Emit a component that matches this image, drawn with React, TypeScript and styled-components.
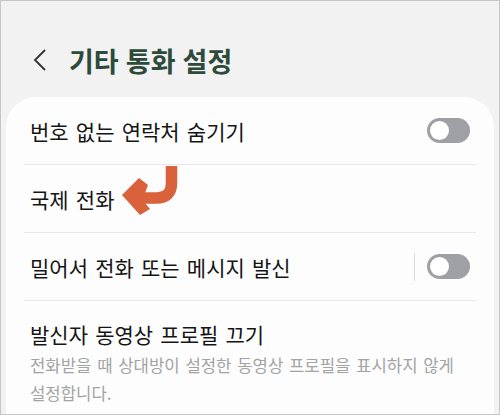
import styled, { createGlobalStyle } from 'styled-components'

const GlobalStyle = createGlobalStyle`
  html, body {
    margin: 0;
    padding: 0;
    background: #f2f2f2;
  }
  * {
    box-sizing: border-box;
  }
`

type Item = {
  label: string
  toggle?: boolean
  divider?: boolean
  arrow?: boolean
  desc?: string
}

const items: Item[] = [
  { label: '번호 없는 연락처 숨기기', toggle: true },
  { label: '국제 전화', arrow: true },
  { label: '밀어서 전화 또는 메시지 발신', toggle: true, divider: true },
  {
    label: '발신자 동영상 프로필 끄기',
    desc: '전화받을 때 상대방이 설정한 동영상 프로필을 표시하지 않게 설정합니다.',
  },
]

export default function App() {
  return (
    <Frame>
      <GlobalStyle />
      <Header>
        <BackIcon viewBox="0 0 14 24">
          <path d="M12 2 L2 12 L12 22" />
        </BackIcon>
        <Title>기타 통화 설정</Title>
      </Header>
      <Card>
        {items.map((item, i) => (
          <Row key={item.label} last={i === items.length - 1}>
            <Texts>
              <Label>
                {item.label}
                {item.arrow && <Arrow />}
              </Label>
              {item.desc && <Desc>{item.desc}</Desc>}
            </Texts>
            {item.divider && <VLine />}
            {item.toggle && (
              <Switch>
                <Knob />
              </Switch>
            )}
          </Row>
        ))}
      </Card>
    </Frame>
  )
}

function Arrow() {
  return (
    <ArrowSvg viewBox="0 0 70 60" width="70" height="60">
      <path
        d="M55.5 5 L55.5 22 Q55.5 37 40 37 L27 37"
        fill="none"
        stroke="#d9613c"
        strokeWidth="11.5"
      />
      <polygon points="6,34 23,17 32,24 29,32 29,42 34,48 24,54" fill="#d9613c" />
    </ArrowSvg>
  )
}

const Frame = styled.div`
  width: 100vw;
  height: 415px;
  border: 1px solid #c6c6c6;
  background: #f2f2f2;
  display: flex;
  flex-direction: column;
  overflow: hidden;
  font-family: 'Noto Sans CJK KR', 'Noto Sans', sans-serif;
`

const Header = styled.div`
  height: 96px;
  flex-shrink: 0;
  display: flex;
  align-items: center;
  padding: 22px 0 0 32px;
`

const BackIcon = styled.svg`
  width: 14px;
  height: 24px;
  fill: none;
  stroke: #333;
  stroke-width: 1.8;
  margin-right: 22px;
`

const Title = styled.h1`
  margin: 0;
  font-size: 27px;
  font-weight: 700;
  color: #2e4a3b;
  word-spacing: 1px;
`

const Card = styled.div`
  flex: 1;
  margin: 0 5px;
  background: #fdfdfd;
  border-radius: 30px 30px 0 0;
  padding: 0 18px;
`

const Row = styled.div<{ last?: boolean }>`
  display: flex;
  align-items: center;
  min-height: 68px;
  padding: ${(p) => (p.last ? '18px 6px 0' : '0 6px')};
  border-bottom: ${(p) => (p.last ? 'none' : '1px solid #e8e8e8')};
`

const Texts = styled.div`
  flex: 1;
  display: flex;
  flex-direction: column;
`

const Label = styled.div`
  display: flex;
  align-items: center;
  height: 30px;
  font-size: 21px;
  word-spacing: 2.5px;
  color: #151515;
`

const Desc = styled.div`
  font-size: 16.7px;
  line-height: 28px;
  color: #a3a3a3;
  word-break: keep-all;
  word-spacing: 2px;
  margin-top: 2px;
`

const ArrowSvg = styled.svg`
  flex-shrink: 0;
  margin: 0 0 16px 2px;
`

const VLine = styled.div`
  width: 1px;
  height: 28px;
  background: #dcdcdc;
  margin-right: 12px;
`

const Switch = styled.div`
  width: 43px;
  height: 25px;
  border-radius: 13px;
  background: #9f9fa6;
  padding: 3px;
  display: flex;
  align-items: center;
`

const Knob = styled.div`
  width: 19px;
  height: 19px;
  border-radius: 50%;
  background: #fff;
`
